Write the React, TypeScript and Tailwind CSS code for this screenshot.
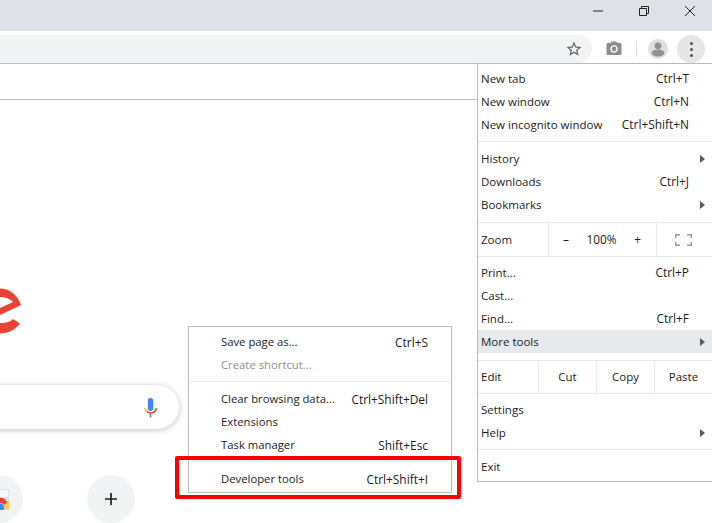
const font = { fontFamily: '"Open Sans", "Noto Sans", sans-serif' };

type Row = { label: string; keys?: string; arrow?: boolean; off?: boolean; hot?: boolean };

const Sep = ({ className = '' }: { className?: string }) => <div className={`h-px bg-[#e9e9e9] ${className}`} />;

const Arrow = () => (
  <svg width="5" height="8" viewBox="0 0 5 8" className="absolute right-[11px] top-[8px]">
    <path d="M0 0 L5 4 L0 8 Z" fill="#5a5a5a" />
  </svg>
);

const Item = ({ row, pad, size = 'text-[11.5px]' }: { row: Row; pad: string; size?: string }) => (
  <div className={`relative flex h-[23px] items-center justify-between ${pad} ${row.hot ? 'bg-[#e8e9ec]' : ''} ${row.off ? 'text-[#8f8f8f]' : 'text-[#1c1c1c]'}`}>
    <span className={size}>{row.label}</span>
    {row.keys && <span className="text-[11.9px]">{row.keys}</span>}
    {row.arrow && <Arrow />}
  </div>
);

const mainPad = 'pl-[3px] pr-[27px]';
const subPad = 'pl-[32px] pr-[23px]';
const subSize = 'text-[11.3px]';

const MainMenu = () => (
  <div className="absolute left-[477px] top-[63px] h-[419px] w-[240px] border border-[#bababa] bg-white pt-[3px]">
    {[
      { label: 'New tab', keys: 'Ctrl+T' },
      { label: 'New window', keys: 'Ctrl+N' },
      { label: 'New incognito window', keys: 'Ctrl+Shift+N' },
    ].map((row) => <Item key={row.label} row={row} pad={mainPad} />)}
    <Sep className="my-[5px]" />
    {[
      { label: 'History', arrow: true },
      { label: 'Downloads', keys: 'Ctrl+J' },
      { label: 'Bookmarks', arrow: true },
    ].map((row) => <Item key={row.label} row={row} pad={mainPad} />)}
    <Sep className="mt-[6px]" />

    <div className="flex h-[33px] items-center text-[11.8px] text-[#1c1c1c]">
      <div className="w-[70px] pl-[3px] text-[11.5px]">Zoom</div>
      <div className="flex h-full w-[108px] items-center justify-between border-l border-[#e9e9e9] pl-[14px] pr-[15px]">
        <span>–</span>
        <span>100%</span>
        <span>+</span>
      </div>
      <div className="flex h-full flex-1 items-center border-l border-[#e9e9e9] pl-[18px]">
        <svg width="17" height="12" viewBox="0 0 17 12" fill="none" stroke="#9a9a9a" strokeWidth="1.4">
          <path d="M0.7 4V0.7H5M12 0.7H16.3V4M16.3 8V11.3H12M5 11.3H0.7V8" />
        </svg>
      </div>
    </div>
    <Sep className="mb-[4px]" />

    {[
      { label: 'Print...', keys: 'Ctrl+P' },
      { label: 'Cast...' },
      { label: 'Find...', keys: 'Ctrl+F' },
      { label: 'More tools', arrow: true, hot: true },
    ].map((row) => <Item key={row.label} row={row} pad={mainPad} />)}
    <Sep className="mt-[7px]" />

    <div className="flex h-[32px] items-center text-[11.5px] text-[#1c1c1c]">
      <div className="w-[60px] pl-[3px]">Edit</div>
      {['Cut', 'Copy', 'Paste'].map((t) => (
        <div key={t} className="flex h-full w-[58px] items-center justify-center border-l border-[#e9e9e9]">{t}</div>
      ))}
    </div>
    <Sep className="mb-[4px]" />

    <Item row={{ label: 'Settings' }} pad={mainPad} />
    <Item row={{ label: 'Help', arrow: true }} pad={mainPad} />
    <Sep className="my-[5px]" />
    <Item row={{ label: 'Exit' }} pad={mainPad} />
  </div>
);

const SubMenu = () => (
  <div className="absolute left-[188px] top-[326px] h-[167px] w-[264px] border border-[#bababa] bg-white pt-[4px]">
    <Item row={{ label: 'Save page as...', keys: 'Ctrl+S' }} pad={subPad} size={subSize} />
    <Item row={{ label: 'Create shortcut...', off: true }} pad={subPad} size={subSize} />
    <Sep className="mx-px mb-[6px] mt-[4px]" />
    <Item row={{ label: 'Clear browsing data...', keys: 'Ctrl+Shift+Del' }} pad={subPad} size={subSize} />
    <Item row={{ label: 'Extensions' }} pad={subPad} size={subSize} />
    <Item row={{ label: 'Task manager', keys: 'Shift+Esc' }} pad={subPad} size={subSize} />
    <Sep className="mx-px mb-[6px] mt-[4px]" />
    <Item row={{ label: 'Developer tools', keys: 'Ctrl+Shift+I' }} pad={subPad} size={subSize} />
  </div>
);

const WindowControls = () => (
  <div className="-mr-px flex h-[31px] justify-end bg-[#dee1e6]">
    <div className="flex h-[22px] w-[46px] items-center justify-center">
      <svg width="10" height="10" viewBox="0 0 10 10"><path d="M0 5H10" stroke="#222" strokeWidth="1" /></svg>
    </div>
    <div className="flex h-[22px] w-[46px] items-center justify-center">
      <svg width="10" height="10" viewBox="0 0 10 10" fill="none" stroke="#222" strokeWidth="1">
        <path d="M0.5 2.5H7.5V9.5H0.5ZM2.5 2.5V0.5H9.5V7.5H7.5" />
      </svg>
    </div>
    <div className="flex h-[22px] w-[46px] items-center justify-center">
      <svg width="10" height="10" viewBox="0 0 10 10" fill="none" stroke="#222" strokeWidth="1">
        <path d="M0 0L10 10M10 0L0 10" />
      </svg>
    </div>
  </div>
);

const Toolbar = () => (
  <div className="flex h-[33px] items-start border-b border-[#bdbdbd] bg-white pt-[4px]">
    <div className="flex h-[28px] flex-1 items-center justify-end rounded-r-[14px] bg-[#f1f3f4] pr-[9px]">
      <svg width="18" height="18" viewBox="0 0 24 24" fill="#5f6368">
        <path d="M22 9.24l-7.19-.62L12 2 9.19 8.63 2 9.24l5.46 4.73L5.82 21 12 17.27 18.18 21l-1.63-7.03L22 9.24zM12 15.4l-3.76 2.27 1-4.28-3.32-2.88 4.38-.38L12 6.1l1.71 4.04 4.38.38-3.32 2.88 1 4.28L12 15.4z" />
      </svg>
    </div>
    <div className="flex h-[28px] items-center pr-[7px]">
      <svg width="18" height="18" viewBox="0 0 24 24" fill="#8a8d91" className="ml-[13px]">
        <circle cx="12" cy="12" r="3.2" />
        <path d="M9 2L7.17 4H4c-1.1 0-2 .9-2 2v12c0 1.1.9 2 2 2h16c1.1 0 2-.9 2-2V6c0-1.1-.9-2-2-2h-3.17L15 2H9zm3 15c-2.76 0-5-2.24-5-5s2.24-5 5-5 5 2.24 5 5-2.24 5-5 5z" />
      </svg>
      <div className="ml-[13px] h-[16px] w-px bg-[#dadce0]" />
      <svg width="20" height="20" viewBox="0 0 20 20" className="ml-[11px]">
        <circle cx="10" cy="10" r="10" fill="#dedede" />
        <circle cx="10" cy="6.8" r="3.4" fill="#8f9194" />
        <ellipse cx="10" cy="14" rx="6.4" ry="3.4" fill="#8f9194" />
      </svg>
      <div className="ml-[9px] flex h-[28px] w-[28px] flex-col items-center justify-center gap-[3px] rounded-full bg-[#e6e6e6]">
        <div className="h-[3px] w-[3px] rounded-full bg-[#4f5256]" />
        <div className="h-[3px] w-[3px] rounded-full bg-[#4f5256]" />
        <div className="h-[3px] w-[3px] rounded-full bg-[#4f5256]" />
      </div>
    </div>
  </div>
);

const Logo = () => (
  <svg width="22" height="46" viewBox="0 0 22 46" className="mt-[188px]" fill="#ea4335">
    <path d="M0 0.5C9 0.5 17 6 21 17L0 27V20L13 14C10 10.5 5 9 0 9Z" />
    <path d="M0 35C6 35 10 34 13 31L20 35.5C15 42 8 45.5 0 45.5Z" />
  </svg>
);

const Mic = () => (
  <svg width="20" height="22" viewBox="0 0 20 22" fill="none">
    <rect x="6.8" y="2" width="5.4" height="13" rx="2.7" fill="#4285f4" />
    <path d="M4 12Q4.3 14 5.6 15.2" stroke="#fbbc05" strokeWidth="1.5" />
    <path d="M5.6 15.2Q7.2 17 9.5 17Q14 17 15.5 12" stroke="#ea4335" strokeWidth="1.5" />
    <rect x="8.7" y="18" width="1.6" height="3.5" fill="#34a853" />
  </svg>
);

const SearchBox = () => (
  <div className="-ml-[25px] mt-[51px] flex h-[44px] w-[204px] items-center justify-end rounded-[22px] bg-white pr-[18px] shadow-[0_1px_6px_rgba(32,33,36,0.28)]">
    <Mic />
  </div>
);

const Shortcuts = () => (
  <div className="-ml-[25px] mt-[46px] flex gap-[64px]">
    <div className="flex h-[48px] w-[48px] items-center justify-center rounded-full bg-[#f1f3f4]">
      <svg width="20" height="21" viewBox="0 0 20 21" className="blur-[0.4px]">
        <rect x="1" y="0" width="19" height="12" fill="#e3e3e3" />
        <rect x="2" y="1" width="17" height="7" fill="#f7f7f7" />
        <rect x="15" y="12" width="5" height="9" fill="#fbd24e" />
        <path d="M3 17A8 8 0 0 1 18 13L15.5 16A5 5 0 0 0 7 17Z" fill="#db4437" />
        <circle cx="11" cy="18.5" r="4" fill="#4285f4" />
      </svg>
    </div>
    <div className="flex h-[48px] w-[48px] items-center justify-center rounded-full bg-[#f1f3f4]">
      <svg width="12" height="12" viewBox="0 0 12 12"><path d="M6 0V12M0 6H12" stroke="#202124" strokeWidth="1.7" /></svg>
    </div>
  </div>
);

export default function App() {
  return (
    <div className="relative h-[523px] w-[712px] overflow-hidden bg-white" style={font}>
      <WindowControls />
      <Toolbar />
      <div className="flex flex-col items-start">
        <div className="mt-[35px] h-px w-full bg-[#bdbdbd]" />
        <Logo />
        <SearchBox />
        <Shortcuts />
      </div>
      <MainMenu />
      <SubMenu />
      <div className="absolute left-[175px] top-[456px] h-[43px] w-[286px] rounded-[2px] border-4 border-[#ff0000]" />
    </div>
  );
}
